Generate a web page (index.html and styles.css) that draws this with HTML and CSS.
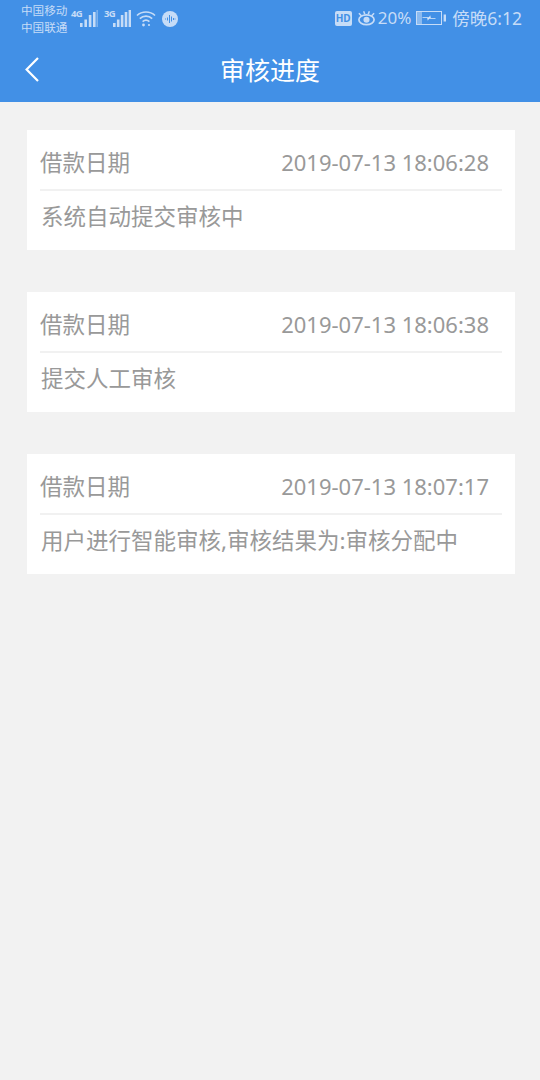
FILE: index.html
```html
<!DOCTYPE html>
<html lang="zh-CN">
<head>
<meta charset="utf-8">
<title>审核进度</title>
<link rel="stylesheet" href="styles.css">
</head>
<body>
<header class="appbar">
  <div class="status">
    <div class="status-left">
      <div class="carriers"><span>中国移动</span><span>中国联通</span></div>
      <span class="net">4G</span>
      <svg class="bars" viewBox="0 0 18 17"><rect x="0" y="13" width="2.6" height="4"/><rect x="4.4" y="9.5" width="2.6" height="7.5"/><rect x="8.8" y="5" width="2.6" height="12"/><rect x="13" y="2" width="2.6" height="15"/><rect class="dim" x="16.4" y="0" width="1.6" height="17"/></svg>
      <span class="net net2">3G</span>
      <svg class="bars" viewBox="0 0 18 17"><rect x="0" y="13" width="2.6" height="4"/><rect x="3.9" y="9.5" width="2.6" height="7.5"/><rect x="7.8" y="5" width="2.6" height="12"/><rect x="11.7" y="2" width="2.6" height="15"/><rect x="15.6" y="0" width="2.4" height="17"/></svg>
      <svg class="wifi" viewBox="0 0 20 17"><path d="M1 5.5C6 .8 14 .8 19 5.5M3.8 8.6C7.3 5.4 12.7 5.4 16.2 8.6M6.6 11.6C8.6 9.8 11.4 9.8 13.4 11.6" fill="none" stroke="#c6dcf7" stroke-width="1.7"/><circle cx="7.5" cy="15" r="1.4" fill="#c6dcf7"/><circle cx="13" cy="15" r="1.1" fill="#c6dcf7"/></svg>
      <svg class="voice" viewBox="0 0 16 16"><circle cx="8" cy="8" r="8" fill="#c6dcf7"/><path d="M3.5 7.5v1M5.5 6.5v3M7.5 4v8M9.5 5.5v5M11.5 7v2M13 7.5v1" stroke="#4290e6" stroke-width="1"/></svg>
    </div>
    <div class="status-right">
      <span class="hd">HD</span>
      <svg class="eye" viewBox="0 0 20 16"><path d="M2 3L4.6 5.6M7 .8L8.2 4M13 .8L11.8 4M18 3L15.4 5.6" stroke="#c6dcf7" stroke-width="1.6"/><ellipse cx="10" cy="9.8" rx="8" ry="5.2" fill="none" stroke="#c6dcf7" stroke-width="1.8"/><circle cx="10" cy="9.8" r="3.2" fill="#c6dcf7"/></svg>
      <span class="pct">20%</span>
      <svg class="batt" viewBox="0 0 30 14"><rect x="0.5" y="0.5" width="25" height="13" fill="none" stroke="#c6dcf7"/><rect x="1" y="1" width="5" height="12" fill="#c6dcf7" opacity=".55"/><rect x="27.6" y="3.5" width="2.4" height="7" fill="#c6dcf7"/><path d="M6.5 6.3h6.5l1.2-2 .6 2.6h4.7v.9h-6.4l-1.3 2-.6-2.7H6.5z" fill="#dbe9fa"/></svg>
      <span class="clock">傍晚6:12</span>
    </div>
  </div>
  <div class="titlebar">
    <svg class="back" viewBox="0 0 14 25"><path d="M13 1L1.6 12.5 13 24" fill="none" stroke="#fff" stroke-width="2.2"/></svg>
    <h1>审核进度</h1>
  </div>
</header>
<main class="list">
  <section class="card">
    <div class="row"><span class="label">借款日期</span><span class="date">2019-07-13 18:06:28</span></div>
    <p class="msg">系统自动提交审核中</p>
  </section>
  <section class="card">
    <div class="row"><span class="label">借款日期</span><span class="date">2019-07-13 18:06:38</span></div>
    <p class="msg">提交人工审核</p>
  </section>
  <section class="card">
    <div class="row"><span class="label">借款日期</span><span class="date">2019-07-13 18:07:17</span></div>
    <p class="msg">用户进行智能审核,审核结果为:审核分配中</p>
  </section>
</main>
</body>
</html>
```
FILE: styles.css
```css
* { box-sizing: border-box; }
html, body { margin: 0; padding: 0; }
body {
  width: 540px;
  height: 1080px;
  overflow: hidden;
  background: #f2f2f2;
  font-family: "Noto Sans", "Noto Sans CJK SC", sans-serif;
  color: #999;
}
.appbar { height: 102px; background: #4290e6; display: flex; flex-direction: column; }
.status {
  height: 36px;
  display: flex;
  justify-content: space-between;
  align-items: center;
  padding: 0 18px 0 22px;
  color: #c6dcf7;
}
.status-left, .status-right { display: flex; align-items: center; }
.carriers { display: flex; flex-direction: column; font-size: 11.6px; line-height: 17px; width: 49px; white-space: nowrap; padding-top: 1px; margin-left: -1px; margin-right: 1px; }
.net { font-size: 9.5px; font-weight: 700; letter-spacing: -.8px; align-self: flex-start; margin-top: 7px; line-height: 12px; width: 9px; white-space: nowrap; }
.net2 { margin-left: 6px; }
.bars { width: 18px; height: 17px; fill: #c6dcf7; }
.bars .dim { opacity: .45; }
.wifi { width: 20px; height: 17px; margin-left: 5px; }
.voice { width: 16px; height: 16px; margin-left: 6px; margin-top: 1px; }
.hd {
  background: #c6dcf7;
  color: #4290e6;
  font-size: 10px;
  font-weight: 700;
  width: 17px;
  height: 15px;
  line-height: 15px;
  border-radius: 2px;
  text-align: center;
}
.eye { width: 19px; height: 16px; margin-left: 5px; }
.pct { font-size: 17px; margin-left: 2px; line-height: 20px; }
.batt { width: 30px; height: 14px; margin-left: 5px; }
.clock { font-size: 17.5px; margin-left: 6px; white-space: nowrap; line-height: 20px; }
.titlebar {
  flex: 1;
  display: flex;
  align-items: center;
  justify-content: center;
  position: relative;
  padding-top: 2px;
}
.titlebar h1 { margin: 0; font-size: 25px; font-weight: 400; color: #fff; line-height: 30px; }
.back { position: absolute; left: 25px; top: 21px; width: 14px; height: 25px; }
.list { padding: 28px 25px 0 27px; display: flex; flex-direction: column; gap: 42px; }
.card { background: #fff; height: 120px; padding: 0 13px; }
.row {
  height: 61px;
  display: flex;
  justify-content: space-between;
  align-items: center;
  border-bottom: 2px solid #f1f1f1;
  font-size: 22.5px;
  line-height: 30px;
  padding: 5px 13px 0 0;
  white-space: nowrap;
}
.label { padding-top: 2px; }
.date { font-size: 22px; }
.msg { margin: 0; height: 57px; line-height: 52px; font-size: 22.5px; padding-left: 1px; white-space: nowrap; }
```
